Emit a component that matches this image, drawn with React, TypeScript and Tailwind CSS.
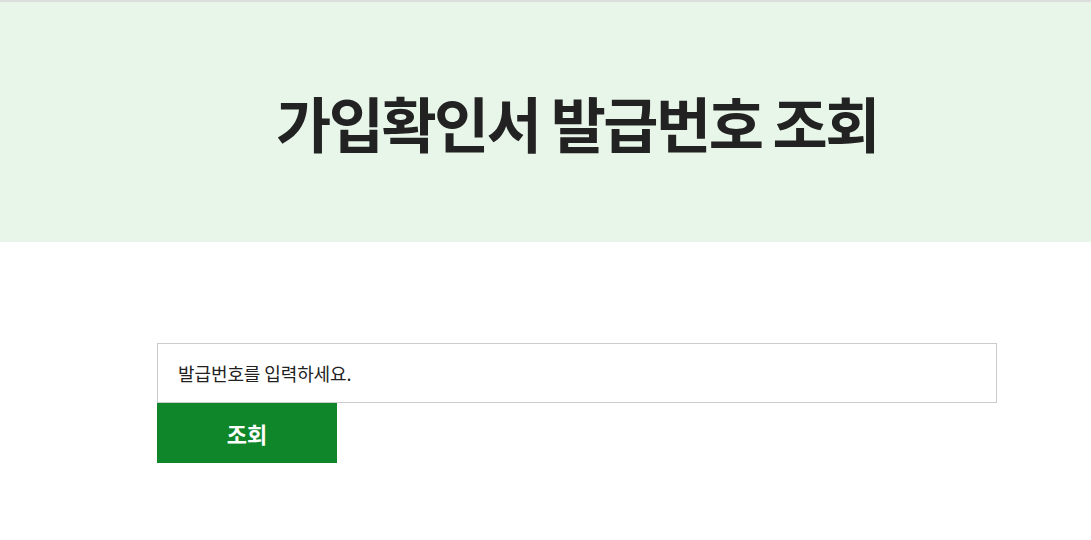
import React, { useState } from 'react';

const font = { fontFamily: '"Noto Sans CJK KR", "Noto Sans", sans-serif' };

export default function App() {
  const [num, setNum] = useState('');

  return (
    <div className="min-h-[540px] bg-white" style={font}>
      <header className="border-t-2 border-[#dddddd] bg-[#e8f6e9]">
        <div className="ml-[157px] flex h-[240px] w-[840px] items-center justify-center">
          <h1 className="text-[60px] font-bold tracking-[-2.5px] text-[#222222]">가입확인서 발급번호 조회</h1>
        </div>
      </header>
      <main className="ml-[157px] w-[840px] pt-[101px]">
        <input
          value={num}
          onChange={(e) => setNum(e.target.value)}
          placeholder="발급번호를 입력하세요."
          className="block h-[60px] w-full border border-[#cccccc] px-5 text-[18px] tracking-[-0.1px] text-[#222222] outline-none placeholder:text-[#222222]"
        />
        <button
          type="button"
          className="block h-[60px] w-[180px] bg-[#0e8629] text-[22px] font-bold text-white"
        >
          조회
        </button>
      </main>
    </div>
  );
}
